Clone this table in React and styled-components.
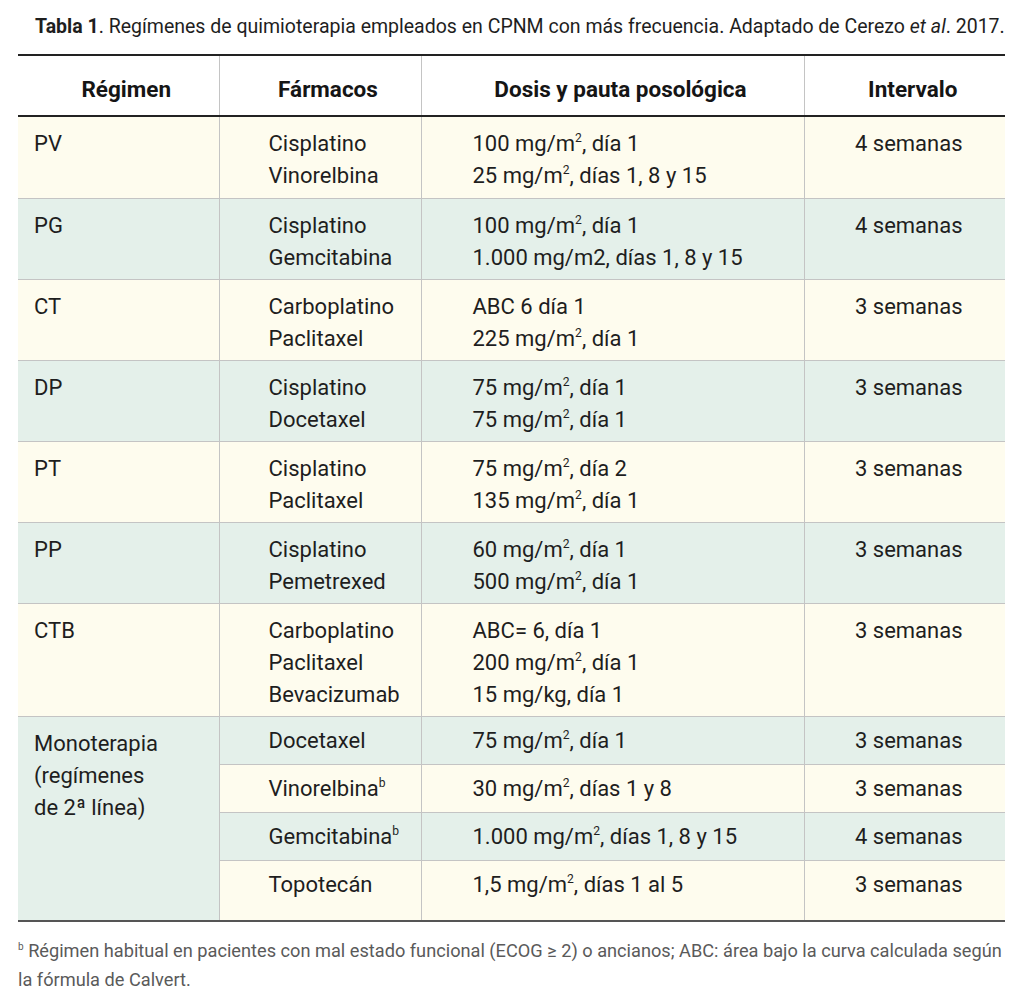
import React from 'react'
import styled, { createGlobalStyle } from 'styled-components'

const GlobalStyle = createGlobalStyle`
  body {
    margin: 0;
    background: #fff;
    font-family: Roboto, "Liberation Sans", sans-serif;
    color: #1e1e1e;
  }
`

const YELLOW = '#fefcee'
const GREEN = '#e4f0ea'

const Page = styled.div`
  width: 987px;
  padding: 12px 19px 0 18px;
`

const Caption = styled.p`
  margin: 0 0 12px;
  padding-left: 17px;
  font-size: 19.5px;
  line-height: 30px;
  color: #1e1e1e;
  white-space: nowrap;
  b { font-weight: 700; }
  i { font-style: italic; }
`

const Table = styled.table`
  width: 987px;
  border-collapse: collapse;
  table-layout: fixed;
  border-top: 2px solid #222;
  border-bottom: 2px solid #555;
  font-size: 22px;
`

const Head = styled.th`
  height: 61px;
  padding: 6px 0 0 16px;
  box-sizing: border-box;
  font-weight: 700;
  font-size: 22.5px;
  color: #151515;
  text-align: center;
  border-bottom: 2px solid #222;
  border-left: ${p => (p.$first ? 'none' : '1px solid #c4c4c4')};
`

const Row = styled.tr`
  background: ${p => (p.$tone === 'green' ? GREEN : YELLOW)};
  border-top: 1px solid #c4c4c4;
  &:first-child { border-top: none; }
`

const Cell = styled.td`
  vertical-align: top;
  line-height: 32px;
  padding: ${p => (p.$compact ? '8px' : '11px')} 0 ${p => (p.$compact ? '7px' : '5px')} ${p => p.$indent || 16}px;
  height: ${p => p.$h ? `${p.$h}px` : 'auto'};
  box-sizing: border-box;
  text-align: ${p => (p.$center ? 'center' : 'left')};
  border-left: ${p => (p.$first ? 'none' : '1px solid #c4c4c4')};
  background: ${p => p.$bg || 'transparent'};
  color: #1e1e1e;
`

const Line = styled.div`
  white-space: nowrap;
`

const Sup = styled.sup`
  font-size: 0.55em;
  line-height: 0;
  vertical-align: 0.75em;
`

const Footnote = styled.p`
  margin: 14px 0 0;
  font-size: 18.2px;
  line-height: 29px;
  color: #5a5a5a;
  white-space: nowrap;
`

const m2 = <>mg/m<Sup>2</Sup></>

const regimens = [
  { name: 'PV', tone: 'yellow', drugs: ['Cisplatino', 'Vinorelbina'], doses: [<>100 {m2}, día 1</>, <>25 {m2}, días 1, 8 y 15</>], interval: '4 semanas', h: 82 },
  { name: 'PG', tone: 'green', drugs: ['Cisplatino', 'Gemcitabina'], doses: [<>100 {m2}, día 1</>, '1.000 mg/m2, días 1, 8 y 15'], interval: '4 semanas' },
  { name: 'CT', tone: 'yellow', drugs: ['Carboplatino', 'Paclitaxel'], doses: ['ABC 6 día 1', <>225 {m2}, día 1</>], interval: '3 semanas' },
  { name: 'DP', tone: 'green', drugs: ['Cisplatino', 'Docetaxel'], doses: [<>75 {m2}, día 1</>, <>75 {m2}, día 1</>], interval: '3 semanas' },
  { name: 'PT', tone: 'yellow', drugs: ['Cisplatino', 'Paclitaxel'], doses: [<>75 {m2}, día 2</>, <>135 {m2}, día 1</>], interval: '3 semanas' },
  { name: 'PP', tone: 'green', drugs: ['Cisplatino', 'Pemetrexed'], doses: [<>60 {m2}, día 1</>, <>500 {m2}, día 1</>], interval: '3 semanas' },
  { name: 'CTB', tone: 'yellow', drugs: ['Carboplatino', 'Paclitaxel', 'Bevacizumab'], doses: ['ABC= 6, día 1', <>200 {m2}, día 1</>, '15 mg/kg, día 1'], interval: '3 semanas', h: 112 },
]

const mono = [
  { tone: 'green', drug: 'Docetaxel', dose: <>75 {m2}, día 1</>, interval: '3 semanas', h: 48 },
  { tone: 'yellow', drug: <>Vinorelbina<Sup>b</Sup></>, dose: <>30 {m2}, días 1 y 8</>, interval: '3 semanas', h: 48 },
  { tone: 'green', drug: <>Gemcitabina<Sup>b</Sup></>, dose: <>1.000 {m2}, días 1, 8 y 15</>, interval: '4 semanas', h: 48 },
  { tone: 'yellow', drug: 'Topotecán', dose: <>1,5 {m2}, días 1 al 5</>, interval: '3 semanas', h: 61 },
]

export default function App() {
  return (
    <Page>
      <GlobalStyle />
      <Caption>
        <b>Tabla 1</b>. Regímenes de quimioterapia empleados en CPNM con más frecuencia. Adaptado de Cerezo <i>et al</i>. 2017.
      </Caption>
      <Table>
        <colgroup>
          <col style={{ width: 201 }} />
          <col style={{ width: 202 }} />
          <col style={{ width: 383 }} />
          <col style={{ width: 201 }} />
        </colgroup>
        <thead>
          <tr>
            <Head $first>Régimen</Head>
            <Head>Fármacos</Head>
            <Head>Dosis y pauta posológica</Head>
            <Head>Intervalo</Head>
          </tr>
        </thead>
        <tbody>
          {regimens.map(r => (
            <Row key={r.name} $tone={r.tone}>
              <Cell $first $h={r.h || 80}>{r.name}</Cell>
              <Cell $indent={49}>{r.drugs.map(d => <Line key={d}>{d}</Line>)}</Cell>
              <Cell $indent={51}>{r.doses.map((d, i) => <Line key={i}>{d}</Line>)}</Cell>
              <Cell $center $indent={8}>{r.interval}</Cell>
            </Row>
          ))}
          {mono.map((r, i) => (
            <Row key={i} $tone={r.tone}>
              {i === 0 && (
                <Cell $first rowSpan={4} $bg={GREEN}>
                  <Line>Monoterapia</Line>
                  <Line>(regímenes</Line>
                  <Line>de 2ª línea)</Line>
                </Cell>
              )}
              <Cell $compact $h={r.h} $indent={49}>{r.drug}</Cell>
              <Cell $compact $h={r.h} $indent={51}>{r.dose}</Cell>
              <Cell $compact $h={r.h} $center $indent={8}>{r.interval}</Cell>
            </Row>
          ))}
        </tbody>
      </Table>
      <Footnote>
        <Sup>b</Sup> Régimen habitual en pacientes con mal estado funcional (ECOG ≥ 2) o ancianos; ABC: área bajo la curva calculada según
        <br />
        la fórmula de Calvert.
      </Footnote>
    </Page>
  )
}
